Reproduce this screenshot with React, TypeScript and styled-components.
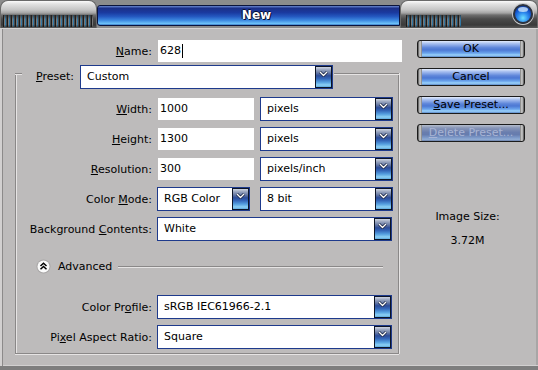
import React from "react";
import styled, { createGlobalStyle } from "styled-components";

const Global = createGlobalStyle`
  html, body {
    margin: 0;
    padding: 0;
    background: #8c8c8c;
  }
  body {
    width: 538px;
    height: 370px;
    overflow: hidden;
    font-family: "DejaVu Sans", Tahoma, sans-serif;
    font-size: 11px;
    color: #000;
  }
`;

const Window = styled.div`
  width: 538px;
  height: 370px;
  display: flex;
  flex-direction: column;
`;

const TitleBar = styled.div`
  height: 28px;
  flex: none;
  display: flex;
  background: #8c8c8c;
`;

const Cap = styled.div<{ $w: number }>`
  width: ${(p) => p.$w}px;
  height: 28px;
  flex: none;
  box-sizing: border-box;
  border-radius: 8px 8px 0 0;
  border: 1px solid #6a6a6a;
  border-bottom: none;
  background: linear-gradient(
    to bottom,
    #fbfbfb 0,
    #e2e2e2 3px,
    #c4c4c4 9px,
    #a4a4a4 12px,
    #6e6e6e 14px,
    #4a4a4a 18px,
    #3a3a3a 24px,
    #5a5a5a 27px,
    #9a9a9a 28px
  );
  display: flex;
  align-items: flex-end;
  padding: 0 0 1px 2px;
`;

const Ridges = styled.div<{ $w: number; $ml?: number }>`
  width: ${(p) => p.$w}px;
  height: 12px;
  margin-left: ${(p) => p.$ml ?? 0}px;
  background: linear-gradient(
      to bottom,
      rgba(40, 40, 40, 0.7) 0,
      rgba(0, 0, 0, 0.1) 35%,
      rgba(0, 0, 0, 0.1) 80%,
      rgba(20, 20, 20, 0.55) 100%
    ),
    repeating-linear-gradient(
      90deg,
      #1e1e1e 0 1px,
      #858585 1px 2px,
      #3886b8 2px 3px,
      #555 3px 4px
    );
`;

const Orb = styled.div`
  width: 20px;
  height: 20px;
  box-sizing: border-box;
  margin: 0 4px 0 auto;
  align-self: center;
  border-radius: 50%;
  border: 2px solid #2c3340;
  box-shadow: 0 0 0 1px #c8c8c8;
  background: radial-gradient(
    circle at 50% 75%,
    #6ee0ff 0,
    #2f8ef0 35%,
    #1250c8 65%,
    #0a2c80 100%
  );
  position: relative;
  &::after {
    content: "";
    position: absolute;
    left: 3px;
    top: 1px;
    width: 10px;
    height: 5px;
    border-radius: 50%;
    background: rgba(220, 240, 255, 0.75);
  }
`;

const TitleMid = styled.div`
  flex: 1;
  padding-top: 5px;
  box-sizing: border-box;
  display: flex;
  flex-direction: column;
`;

const TitleBlue = styled.div`
  height: 21px;
  box-sizing: border-box;
  border: 1px solid #0b143c;
  border-radius: 3px 0 0 3px;
  background: linear-gradient(
    to bottom,
    #6a88d0 0,
    #1c3088 12%,
    #1a3aa0 35%,
    #2458c0 55%,
    #3c88e0 75%,
    #6cc0f8 92%,
    #3a7ac8 100%
  );
  color: #fff;
  font-weight: bold;
  font-size: 12px;
  line-height: 19px;
  text-align: center;
  padding-left: 16px;
  text-shadow: 1px 1px 0 #0a1030, -1px 0 0 #0a1030, 0 -1px 0 #0a1030;
`;

const Body = styled.div`
  flex: 1;
  display: flex;
  background: #bdbbbb;
  box-sizing: border-box;
  padding-left: 3px;
  border-top: 1px solid #d6d4d4;
  border-bottom: 4px solid #7e7e7e;
  box-shadow: inset 2px 0 0 #d2d0d0, inset 3px 0 0 #8c8a8a,
    inset 0 -1px 0 #d2d0d0, inset -2px 0 0 #a8a6a6;
`;

const Main = styled.div`
  width: 402px;
  flex: none;
  box-sizing: border-box;
  padding: 10px 0 0 12px;
  display: flex;
  flex-direction: column;
`;

const Row = styled.div<{ $mt?: number }>`
  display: flex;
  align-items: center;
  height: 24px;
  margin-top: ${(p) => p.$mt ?? 0}px;
`;

const Label = styled.label<{ $w: number }>`
  width: ${(p) => p.$w}px;
  flex: none;
  box-sizing: border-box;
  text-align: right;
  padding-right: 5px;
  white-space: nowrap;
`;

const TextField = styled.div<{ $w: number }>`
  width: ${(p) => p.$w}px;
  height: 22px;
  margin-left: 1px;
  box-sizing: border-box;
  background: #fff;
  padding-left: 2px;
  line-height: 22px;
  display: flex;
  align-items: center;
`;

const Caret = styled.span`
  width: 1px;
  height: 14px;
  background: #000;
  margin-left: 1px;
`;

const SelectBox = styled.div<{ $w: number }>`
  width: ${(p) => p.$w}px;
  height: 24px;
  flex: none;
  box-sizing: border-box;
  border: 1px solid #1e3a8c;
  background: #fff;
  display: flex;
  align-items: stretch;
`;

const SelectText = styled.span`
  flex: 1;
  padding-left: 6px;
  line-height: 22px;
  white-space: nowrap;
  overflow: hidden;
`;

const DropButton = styled.span`
  width: 17px;
  flex: none;
  box-sizing: border-box;
  border: 1px solid #0c1426;
  background: linear-gradient(
    to bottom,
    #d0d6e2 0,
    #98a4be 14%,
    #6a7ca6 28%,
    #2c4c98 44%,
    #3466b8 58%,
    #56a0e0 76%,
    #8cd0f4 90%,
    #60aae0 100%
  );
  display: flex;
  justify-content: center;
  padding-top: 4px;
`;

const Group = styled.div`
  width: 384px;
  box-sizing: border-box;
  margin-top: 10px;
  border: 1px solid #8a8888;
  border-top: none;
  box-shadow: inset 1px 0 0 #e6e4e4, 1px 0 0 #e6e4e4, 0 1px 0 #e6e4e4;
  padding: 0 0 4px 0;
  display: flex;
  flex-direction: column;
`;

const GroupTop = styled.div`
  display: flex;
  align-items: flex-start;
  margin: -8px -1px 0 -1px;
  height: 24px;
`;

const EdgeLine = styled.div<{ $grow?: boolean }>`
  ${(p) => (p.$grow ? "flex: 1; margin-left: 1px;" : "width: 7px;")}
  margin-top: 8px;
  height: 0;
  border-top: 1px solid #8a8888;
  box-shadow: 0 1px 0 #e6e4e4;
`;

const PresetLabel = styled.label`
  width: 58px;
  box-sizing: border-box;
  text-align: right;
  padding-right: 6px;
  line-height: 24px;
`;

const UnitSlot = styled.div`
  margin-left: auto;
  margin-right: 5px;
`;

const AdvancedRow = styled.div`
  display: flex;
  align-items: center;
  height: 16px;
  margin-top: 17px;
  padding-left: 20px;
`;

const AdvancedText = styled.span`
  margin-left: 7px;
`;

const Rule = styled.div`
  flex: 1;
  margin: 0 15px 0 6px;
  height: 0;
  border-top: 1px solid #8a8888;
  box-shadow: 0 1px 0 #e6e4e4;
`;

const Side = styled.div`
  flex: 1;
  display: flex;
  flex-direction: column;
  padding: 11px 0 0 12px;
`;

const Button = styled.div<{ $disabled?: boolean; $mt?: number }>`
  width: 108px;
  height: 18px;
  box-sizing: border-box;
  margin-top: ${(p) => p.$mt ?? 0}px;
  border: 1px solid #1c1c1c;
  border-radius: 3px;
  text-align: center;
  line-height: 16px;
  color: ${(p) => (p.$disabled ? "#a8b4d4" : "#000")};
  background: linear-gradient(
      90deg,
      #4a4a4a 0,
      #d6d6d6 2px,
      #7a7a7a 4px,
      transparent 4px,
      transparent calc(100% - 4px),
      #7a7a7a calc(100% - 4px),
      #d6d6d6 calc(100% - 2px),
      #4a4a4a 100%
    ),
    ${(p) =>
      p.$disabled
        ? "linear-gradient(to bottom, #b4bccc 0, #8896b8 18%, #6a7eae 45%, #667cae 60%, #7c98c8 78%, #90acd4 90%, #6a7ea8 100%)"
        : "linear-gradient(to bottom, #e4ecfc 0, #a8c0f0 16%, #5e86da 42%, #4c78d4 56%, #6aa4ec 76%, #9cd4fc 88%, #5a86c8 100%)"};
`;

const InfoText = styled.div<{ $mt: number }>`
  width: 108px;
  box-sizing: border-box;
  padding-right: 7px;
  text-align: center;
  line-height: 14px;
  margin-top: ${(p) => p.$mt}px;
`;

const Chevron = () => (
  <svg width="9" height="6" viewBox="0 0 9 6">
    <polyline
      points="1,1 4.5,4.5 8,1"
      fill="none"
      stroke="#0a1430"
      strokeWidth="2.6"
    />
    <polyline
      points="1,1 4.5,4.5 8,1"
      fill="none"
      stroke="#fff"
      strokeWidth="1.4"
    />
  </svg>
);

const Select = ({ w, value }: { w: number; value: string }) => (
  <SelectBox $w={w}>
    <SelectText>{value}</SelectText>
    <DropButton>
      <Chevron />
    </DropButton>
  </SelectBox>
);

const AdvancedIcon = () => (
  <svg width="15" height="15" viewBox="0 0 15 15">
    <circle cx="7.5" cy="7.5" r="7" fill="#a8a6a6" />
    <circle cx="7.5" cy="7.5" r="6" fill="#fafafa" />
    <polyline
      points="4.5,7 7.5,4.2 10.5,7"
      fill="none"
      stroke="#000"
      strokeWidth="1.5"
    />
    <polyline
      points="4.5,10.3 7.5,7.5 10.5,10.3"
      fill="none"
      stroke="#000"
      strokeWidth="1.5"
    />
  </svg>
);

const LABEL_W = 141;

export default function App() {
  return (
    <Window>
      <Global />
      <TitleBar>
        <Cap $w={97}>
          <Ridges $w={90} />
        </Cap>
        <TitleMid>
          <TitleBlue>New</TitleBlue>
        </TitleMid>
        <Cap $w={138}>
          <Ridges $w={55} $ml={3} />
          <Orb />
        </Cap>
      </TitleBar>
      <Body>
        <Main>
          <Row>
            <Label $w={142}>
              <u>N</u>ame:
            </Label>
            <TextField $w={244}>
              628
              <Caret />
            </TextField>
          </Row>
          <Group>
            <GroupTop>
              <EdgeLine />
              <PresetLabel>
                <u>P</u>reset:
              </PresetLabel>
              <Select w={253} value="Custom" />
              <EdgeLine $grow />
            </GroupTop>
            <Row $mt={8}>
              <Label $w={LABEL_W}>
                <u>W</u>idth:
              </Label>
              <TextField $w={96}>1000</TextField>
              <UnitSlot>
                <Select w={133} value="pixels" />
              </UnitSlot>
            </Row>
            <Row $mt={6}>
              <Label $w={LABEL_W}>
                <u>H</u>eight:
              </Label>
              <TextField $w={96}>1300</TextField>
              <UnitSlot>
                <Select w={133} value="pixels" />
              </UnitSlot>
            </Row>
            <Row $mt={6}>
              <Label $w={LABEL_W}>
                <u>R</u>esolution:
              </Label>
              <TextField $w={96}>300</TextField>
              <UnitSlot>
                <Select w={133} value="pixels/inch" />
              </UnitSlot>
            </Row>
            <Row $mt={6}>
              <Label $w={LABEL_W}>
                Color <u>M</u>ode:
              </Label>
              <Select w={93} value="RGB Color" />
              <UnitSlot>
                <Select w={133} value="8 bit" />
              </UnitSlot>
            </Row>
            <Row $mt={6}>
              <Label $w={LABEL_W}>
                Background <u>C</u>ontents:
              </Label>
              <Select w={235} value="White" />
            </Row>
            <AdvancedRow>
              <AdvancedIcon />
              <AdvancedText>Advanced</AdvancedText>
              <Rule />
            </AdvancedRow>
            <Row $mt={21}>
              <Label $w={LABEL_W}>
                Color Pr<u>o</u>file:
              </Label>
              <Select w={235} value="sRGB IEC61966-2.1" />
            </Row>
            <Row $mt={6}>
              <Label $w={LABEL_W}>
                Pi<u>x</u>el Aspect Ratio:
              </Label>
              <Select w={235} value="Square" />
            </Row>
          </Group>
        </Main>
        <Side>
          <Button>OK</Button>
          <Button $mt={10}>Cancel</Button>
          <Button $mt={10}>
            <u>S</u>ave Preset...
          </Button>
          <Button $mt={10} $disabled>
            <u>D</u>elete Preset...
          </Button>
          <InfoText $mt={68}>Image Size:</InfoText>
          <InfoText $mt={10}>3.72M</InfoText>
        </Side>
      </Body>
    </Window>
  );
}
